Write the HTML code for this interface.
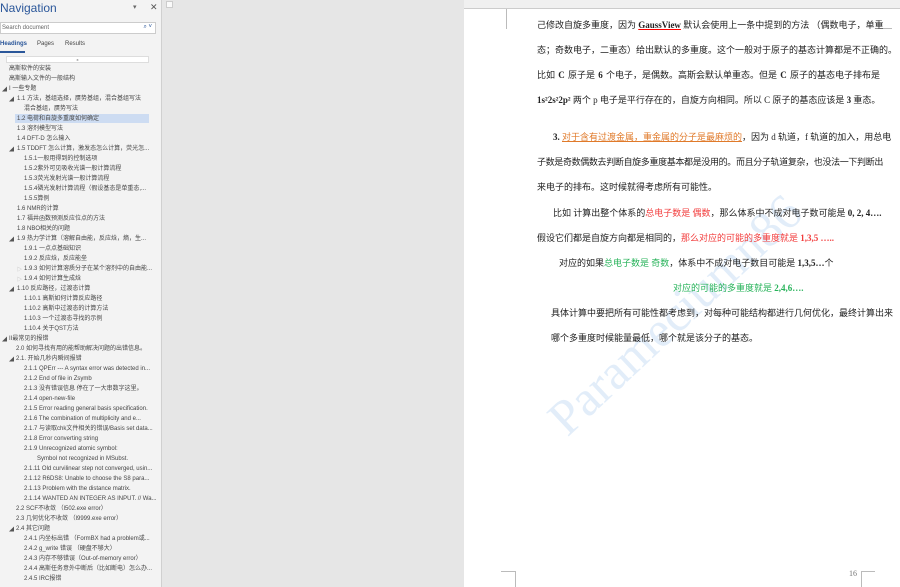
<!DOCTYPE html>
<html><head><meta charset="utf-8"><style>
*{margin:0;padding:0;box-sizing:border-box}
body{width:900px;height:587px;overflow:hidden;background:#e6e6e6;font-family:"Liberation Sans","Noto Sans CJK SC",sans-serif;position:relative}
#nav{position:absolute;left:0;top:0;width:162px;height:587px;background:#f3f3f3;border-right:1px solid #d0d0d0}
.t{position:absolute;white-space:nowrap;font-size:6px;color:#444;line-height:8px}
.tri{position:absolute;font-size:5px;color:#555}
#page{position:absolute;left:464px;top:9px;width:436px;height:578px;background:#fff;overflow:hidden}
#ruler{position:absolute;left:464px;top:0;width:436px;height:9px;background:#f0f0f0;border-bottom:1px solid #ccc}
.p{position:absolute;white-space:nowrap;font-size:9px;color:#222;font-family:"Liberation Serif","Noto Sans CJK SC",sans-serif;line-height:12px}
.r{color:#f23c3c}.g{color:#27b35a}.o{color:#e07a2a;text-decoration:underline}
</style></head><body>
<div id="nav">
<div style="position:absolute;left:0;top:1px;font-size:12px;color:#2b579a">Navigation</div>
<div style="position:absolute;left:133px;top:3px;font-size:7px;color:#666">▾</div>
<div style="position:absolute;left:150px;top:2px;font-size:9px;color:#555">✕</div>
<div style="position:absolute;left:0;top:22px;width:156px;height:12px;background:#fff;border:1px solid #ccc;font-size:6px;color:#666;padding:2px 1px">Search document<span style="position:absolute;right:3px;top:1px;color:#2b579a">⌕ ˅</span></div>
<div style="position:absolute;left:0;top:41px;font-size:6px;font-weight:bold;color:#2b579a">Headings</div>
<div style="position:absolute;left:0;top:51px;width:25px;height:2px;background:#2b579a"></div>
<div style="position:absolute;left:37px;top:41px;font-size:6px;color:#444">Pages</div>
<div style="position:absolute;left:65px;top:41px;font-size:6px;color:#444">Results</div>
<div style="position:absolute;left:6px;top:56px;width:143px;height:7px;background:#fff;border:1px solid #ddd;font-size:4px;text-align:center;color:#555">x</div>
<div style="position:absolute;left:15px;top:114px;width:134px;height:9px;background:#cddcf2"></div>
<div class="t" style="left:9px;top:65px">高斯软件的安装</div>
<div class="t" style="left:9px;top:75px">高斯输入文件的一般结构</div>
<div class="tri" style="left:2px;top:86px">◢</div><div class="t" style="left:9px;top:85px">I 一些专题</div>
<div class="tri" style="left:9px;top:96px">◢</div><div class="t" style="left:17px;top:95px">1.1 方法，基组选择，赝势基组，混合基组写法</div>
<div class="t" style="left:24px;top:105px">混合基组，赝势写法</div>
<div class="t" style="left:17px;top:115px">1.2 电荷和自旋多重度如何确定</div>
<div class="t" style="left:17px;top:125px">1.3 溶剂模型写法</div>
<div class="t" style="left:17px;top:135px">1.4 DFT-D 怎么输入</div>
<div class="tri" style="left:9px;top:146px">◢</div><div class="t" style="left:17px;top:145px">1.5 TDDFT 怎么计算，激发态怎么计算，荧光怎...</div>
<div class="t" style="left:24px;top:155px">1.5.1一般用得到的控制选项</div>
<div class="t" style="left:24px;top:165px">1.5.2紫外可见吸收光谱一般计算流程</div>
<div class="t" style="left:24px;top:175px">1.5.3荧光发射光谱一般计算流程</div>
<div class="t" style="left:24px;top:185px">1.5.4磷光发射计算流程（假设基态是单重态,...</div>
<div class="t" style="left:24px;top:195px">1.5.5算例</div>
<div class="t" style="left:17px;top:205px">1.6 NMR的计算</div>
<div class="t" style="left:17px;top:215px">1.7 福井函数预测反应位点的方法</div>
<div class="t" style="left:17px;top:225px">1.8 NBO相关的问题</div>
<div class="tri" style="left:9px;top:236px">◢</div><div class="t" style="left:17px;top:235px">1.9 热力学计算（溶解自由能，反应焓，熵，生...</div>
<div class="t" style="left:24px;top:245px">1.9.1 一点点基础知识</div>
<div class="t" style="left:24px;top:255px">1.9.2 反应焓，反应能垒</div>
<div class="tri" style="left:17px;top:266px;color:#aaa">▷</div><div class="t" style="left:24px;top:265px">1.9.3 如何计算溶质分子在某个溶剂中的自由能...</div>
<div class="tri" style="left:17px;top:276px;color:#aaa">▷</div><div class="t" style="left:24px;top:275px">1.9.4 如何计算生成焓</div>
<div class="tri" style="left:9px;top:286px">◢</div><div class="t" style="left:17px;top:285px">1.10 反应路径，过渡态计算</div>
<div class="t" style="left:24px;top:295px">1.10.1 高斯如何计算反应路径</div>
<div class="t" style="left:24px;top:305px">1.10.2 高斯中过渡态的计算方法</div>
<div class="t" style="left:24px;top:315px">1.10.3 一个过渡态寻找的示例</div>
<div class="t" style="left:24px;top:325px">1.10.4 关于QST方法</div>
<div class="tri" style="left:2px;top:336px">◢</div><div class="t" style="left:9px;top:335px">II最常见的报错</div>
<div class="t" style="left:16px;top:345px">2.0 如何寻找有用的能帮助解决问题的出错信息。</div>
<div class="tri" style="left:9px;top:356px">◢</div><div class="t" style="left:16px;top:355px">2.1. 开始几秒内瞬间报错</div>
<div class="t" style="left:24px;top:365px">2.1.1 QPErr --- A syntax error was detected in...</div>
<div class="t" style="left:24px;top:375px">2.1.2 End of file in Zsymb</div>
<div class="t" style="left:24px;top:385px">2.1.3 没有错误信息 停在了一大串数字这里。</div>
<div class="t" style="left:24px;top:395px">2.1.4 open-new-file</div>
<div class="t" style="left:24px;top:405px">2.1.5 Error reading general basis specification.</div>
<div class="t" style="left:24px;top:415px">2.1.6 The combination of multiplicity and e...</div>
<div class="t" style="left:24px;top:425px">2.1.7 与读取chk文件相关的错误/Basis set data...</div>
<div class="t" style="left:24px;top:435px">2.1.8 Error converting string</div>
<div class="t" style="left:24px;top:445px">2.1.9 Unrecognized atomic symbol:</div>
<div class="t" style="left:37px;top:455px">Symbol not recognized in MSubst.</div>
<div class="t" style="left:24px;top:465px">2.1.11 Old curvilinear step not converged, usin...</div>
<div class="t" style="left:24px;top:475px">2.1.12 R6DS8: Unable to choose the S8 para...</div>
<div class="t" style="left:24px;top:485px">2.1.13 Problem with the distance matrix.</div>
<div class="t" style="left:24px;top:495px">2.1.14 WANTED AN INTEGER AS INPUT. // Wa...</div>
<div class="t" style="left:16px;top:505px">2.2 SCF不收敛 （l502.exe error）</div>
<div class="t" style="left:16px;top:515px">2.3 几何优化不收敛 （l9999.exe error）</div>
<div class="tri" style="left:9px;top:526px">◢</div><div class="t" style="left:16px;top:525px">2.4 其它问题</div>
<div class="t" style="left:24px;top:535px">2.4.1 内坐标出错 （FormBX had a problem或...</div>
<div class="t" style="left:24px;top:545px">2.4.2 g_write 错误 （硬盘不够大）</div>
<div class="t" style="left:24px;top:555px">2.4.3 内存不够错误（Out-of-memory error）</div>
<div class="t" style="left:24px;top:565px">2.4.4 高斯任务意外中断后（比如断电）怎么办...</div>
<div class="t" style="left:24px;top:575px">2.4.5 IRC报错</div>
</div>
<div style="position:absolute;left:166px;top:1px;width:7px;height:7px;background:#fafafa;border:1px solid #ccc"></div>
<div id="ruler"></div>
<div id="page">
<div style="position:absolute;left:42px;top:0;width:1px;height:20px;background:#bbb"></div>
<div style="position:absolute;left:414px;top:19px;width:14px;height:1px;background:#bbb"></div>
<div style="position:absolute;left:37px;top:562px;width:14px;height:1px;background:#bbb"></div>
<div style="position:absolute;left:51px;top:562px;width:1px;height:16px;background:#bbb"></div>
<div style="position:absolute;left:397px;top:562px;width:14px;height:1px;background:#bbb"></div>
<div style="position:absolute;left:397px;top:562px;width:1px;height:16px;background:#bbb"></div>
<div style="position:absolute;left:385px;top:560px;font-size:8px;color:#777;font-family:'Liberation Serif',serif">16</div>
<div style="position:absolute;left:72px;top:395px;transform:rotate(-43deg);transform-origin:0 0;font-family:'Liberation Serif',serif;font-size:50px;color:#e2edf9;white-space:nowrap">Parameciumn86</div>
</div>
<div class="p" style="left:537px;top:19px">己修改自旋多重度，因为 <b style="text-decoration:underline red">GaussView</b> 默认会使用上一条中提到的方法 （偶数电子，单重</div>
<div class="p" style="left:537px;top:44px">态；奇数电子，二重态）给出默认的多重度。这个一般对于原子的基态计算都是不正确的。</div>
<div class="p" style="left:537px;top:69px;word-spacing:1px">比如 <b>C</b> 原子是 <b>6</b> 个电子，是偶数。高斯会默认单重态。但是 <b>C</b> 原子的基态电子排布是</div>
<div class="p" style="left:537px;top:94px"><b>1s²2s²2p²</b> 两个 p 电子是平行存在的，自旋方向相同。所以 C 原子的基态应该是 <b>3</b> 重态。</div>
<div class="p" style="left:553px;top:131px"><b>3.</b> <span class="o">对于含有过渡金属，重金属的分子是最麻烦的</span>，因为 d 轨道，f 轨道的加入，用总电</div>
<div class="p" style="left:537px;top:156px;letter-spacing:-0.35px">子数是奇数偶数去判断自旋多重度基本都是没用的。而且分子轨道复杂，也没法一下判断出</div>
<div class="p" style="left:537px;top:181px">来电子的排布。这时候就得考虑所有可能性。</div>
<div class="p" style="left:553px;top:207px">比如 计算出整个体系的<span class="r">总电子数是 偶数</span>，那么体系中不成对电子数可能是 <b>0, 2, 4….</b></div>
<div class="p" style="left:537px;top:232px">假设它们都是自旋方向都是相同的，<span class="r">那么对应的可能的多重度就是 <b>1,3,5 …..</b></span></div>
<div class="p" style="left:559px;top:257px">对应的如果<span class="g">总电子数是 奇数</span>，体系中不成对电子数目可能是 <b>1,3,5…</b>个</div>
<div class="p g" style="left:673px;top:282px">对应的可能的多重度就是 <b>2,4,6….</b></div>
<div class="p" style="left:551px;top:307px">具体计算中要把所有可能性都考虑到，对每种可能结构都进行几何优化，最终计算出来</div>
<div class="p" style="left:551px;top:332px">哪个多重度时候能量最低，哪个就是该分子的基态。</div>
</body></html>
